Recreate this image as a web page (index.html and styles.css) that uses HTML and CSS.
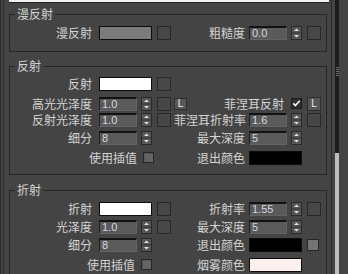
FILE: index.html
```html
<!DOCTYPE html>
<html>
<head>
<meta charset="utf-8">
<link rel="stylesheet" href="styles.css">
</head>
<body>
<div class="app">
  <div class="panel">
    <div class="topbar"></div>

    <fieldset class="group g1">
      <legend>漫反射</legend>
      <div class="rows">
        <div class="row">
          <span class="lbl">漫反射</span>
          <span class="swatch sw-gray"></span>
          <span class="sq"></span>
          <span class="rlbl">粗糙度</span>
          <span class="num"><span class="field">0.0</span><svg class="spin" width="11" height="14" viewBox="0 0 11 14"><rect x="0.5" y="0.5" width="10" height="13" fill="#565656" stroke="#2a2a2a"/><path d="M1 7h9" stroke="#333"/><path d="M5.5 2.5L8 5H3z" fill="#e0e0e0"/><path d="M3 9H8L5.5 11.5z" fill="#e0e0e0"/></svg></span>
          <span class="sq"></span>
        </div>
      </div>
    </fieldset>

    <fieldset class="group g2">
      <legend>反射</legend>
      <div class="rows">
        <div class="row">
          <span class="lbl">反射</span>
          <span class="swatch sw-white"></span>
          <span class="sq"></span>
        </div>
        <div class="row">
          <span class="lbl">高光光泽度</span>
          <span class="num"><span class="field">1.0</span><svg class="spin" width="11" height="14" viewBox="0 0 11 14"><rect x="0.5" y="0.5" width="10" height="13" fill="#565656" stroke="#2a2a2a"/><path d="M1 7h9" stroke="#333"/><path d="M5.5 2.5L8 5H3z" fill="#e0e0e0"/><path d="M3 9H8L5.5 11.5z" fill="#e0e0e0"/></svg></span>
          <span class="sq"></span>
          <span class="lbtn">L</span>
          <span class="rcheck"><span class="rtext">菲涅耳反射</span><svg class="cb" width="11" height="11" viewBox="0 0 11 11"><rect x="0.5" y="0.5" width="10" height="10" fill="#2e2e2e" stroke="#1c1c1c"/><path d="M2.3 5.4L4.4 7.6L8.7 2.8" fill="none" stroke="#f2f2f2" stroke-width="1.7"/></svg></span>
          <span class="lbtn lbtn-r">L</span>
        </div>
        <div class="row">
          <span class="lbl">反射光泽度</span>
          <span class="num"><span class="field">1.0</span><svg class="spin" width="11" height="14" viewBox="0 0 11 14"><rect x="0.5" y="0.5" width="10" height="13" fill="#565656" stroke="#2a2a2a"/><path d="M1 7h9" stroke="#333"/><path d="M5.5 2.5L8 5H3z" fill="#e0e0e0"/><path d="M3 9H8L5.5 11.5z" fill="#e0e0e0"/></svg></span>
          <span class="sq"></span>
          <span class="rlbl">菲涅耳折射率</span>
          <span class="num"><span class="field">1.6</span><svg class="spin" width="11" height="14" viewBox="0 0 11 14"><rect x="0.5" y="0.5" width="10" height="13" fill="#565656" stroke="#2a2a2a"/><path d="M1 7h9" stroke="#333"/><path d="M5.5 2.5L8 5H3z" fill="#e0e0e0"/><path d="M3 9H8L5.5 11.5z" fill="#e0e0e0"/></svg></span>
          <span class="sq"></span>
        </div>
        <div class="row">
          <span class="lbl">细分</span>
          <span class="num"><span class="field">8</span><svg class="spin" width="11" height="14" viewBox="0 0 11 14"><rect x="0.5" y="0.5" width="10" height="13" fill="#565656" stroke="#2a2a2a"/><path d="M1 7h9" stroke="#333"/><path d="M5.5 2.5L8 5H3z" fill="#e0e0e0"/><path d="M3 9H8L5.5 11.5z" fill="#e0e0e0"/></svg></span>
          <span class="rlbl">最大深度</span>
          <span class="num"><span class="field">5</span><svg class="spin" width="11" height="14" viewBox="0 0 11 14"><rect x="0.5" y="0.5" width="10" height="13" fill="#565656" stroke="#2a2a2a"/><path d="M1 7h9" stroke="#333"/><path d="M5.5 2.5L8 5H3z" fill="#e0e0e0"/><path d="M3 9H8L5.5 11.5z" fill="#e0e0e0"/></svg></span>
        </div>
        <div class="row">
          <span class="lcheck"><span class="ltext">使用插值</span><span class="box"></span></span>
          <span class="rlbl">退出颜色</span>
          <span class="swatch sw-black"></span>
        </div>
      </div>
    </fieldset>

    <fieldset class="group g3">
      <legend>折射</legend>
      <div class="rows">
        <div class="row">
          <span class="lbl">折射</span>
          <span class="swatch sw-white"></span>
          <span class="sq"></span>
          <span class="rlbl">折射率</span>
          <span class="num"><span class="field">1.55</span><svg class="spin" width="11" height="14" viewBox="0 0 11 14"><rect x="0.5" y="0.5" width="10" height="13" fill="#565656" stroke="#2a2a2a"/><path d="M1 7h9" stroke="#333"/><path d="M5.5 2.5L8 5H3z" fill="#e0e0e0"/><path d="M3 9H8L5.5 11.5z" fill="#e0e0e0"/></svg></span>
          <span class="sq"></span>
        </div>
        <div class="row">
          <span class="lbl">光泽度</span>
          <span class="num"><span class="field">1.0</span><svg class="spin" width="11" height="14" viewBox="0 0 11 14"><rect x="0.5" y="0.5" width="10" height="13" fill="#565656" stroke="#2a2a2a"/><path d="M1 7h9" stroke="#333"/><path d="M5.5 2.5L8 5H3z" fill="#e0e0e0"/><path d="M3 9H8L5.5 11.5z" fill="#e0e0e0"/></svg></span>
          <span class="sq"></span>
          <span class="rlbl">最大深度</span>
          <span class="num"><span class="field">5</span><svg class="spin" width="11" height="14" viewBox="0 0 11 14"><rect x="0.5" y="0.5" width="10" height="13" fill="#565656" stroke="#2a2a2a"/><path d="M1 7h9" stroke="#333"/><path d="M5.5 2.5L8 5H3z" fill="#e0e0e0"/><path d="M3 9H8L5.5 11.5z" fill="#e0e0e0"/></svg></span>
        </div>
        <div class="row">
          <span class="lbl">细分</span>
          <span class="num"><span class="field">8</span><svg class="spin" width="11" height="14" viewBox="0 0 11 14"><rect x="0.5" y="0.5" width="10" height="13" fill="#565656" stroke="#2a2a2a"/><path d="M1 7h9" stroke="#333"/><path d="M5.5 2.5L8 5H3z" fill="#e0e0e0"/><path d="M3 9H8L5.5 11.5z" fill="#e0e0e0"/></svg></span>
          <span class="rlbl">退出颜色</span>
          <span class="swatch sw-black"></span>
          <span class="mini"></span>
        </div>
        <div class="row">
          <span class="lcheck lcheck-2"><span class="ltext">使用插值</span><span class="box"></span></span>
          <span class="rlbl">烟雾颜色</span>
          <span class="swatch sw-fog"></span>
        </div>
      </div>
    </fieldset>
  </div>

  <div class="scroll">
    <div class="bar">
      <div class="thumb"><span class="grip"></span></div>
      <div class="track"></div>
    </div>
  </div>
</div>
</body>
</html>
```

FILE: styles.css
```css
html, body {
  margin: 0;
  padding: 0;
}
body {
  background: #444444;
  font-family: "Noto Sans CJK SC", "Liberation Sans", sans-serif;
  font-size: 12px;
  color: #d4d4d4;
}
.app {
  display: flex;
  width: 348px;
  height: 274px;
  overflow: hidden;
}
.panel {
  width: 332px;
  flex: none;
  box-sizing: border-box;
  border-left: 1px solid #2a2a2a;
  border-right: 1px solid #2a2a2a;
  box-shadow: inset 2px 0 0 #444444, inset 3px 0 0 #2c2c2c;
  overflow: hidden;
}
.topbar {
  height: 2px;
  margin: 0 2px 0 8px;
  background: #f2f2f2;
  border-bottom: 1px solid #1e1e1e;
}
.group {
  border: 1px solid #262626;
  margin: 0 4px 0 8px;
  padding: 0 4px 11px 0;
  min-width: 0;
}
.g1 { margin-top: 4px; padding-top: 5px; }
.g2 { margin-top: 7px; padding-top: 4px; }
.g3 { margin-top: 8px; padding-top: 5px; }
.group legend {
  margin-left: 5px;
  padding: 0 2px;
  line-height: 14px;
  height: 14px;
  color: #d4d4d4;
}
.rows {
  display: flex;
  flex-direction: column;
  gap: 4px;
}
.row {
  display: grid;
  grid-template-columns: 89px 58px 17px 13px 62px 58px 14px;
  height: 14px;
  align-items: center;
}
.lbl {
  grid-column: 1;
  text-align: right;
  padding-right: 7px;
  line-height: 14px;
  white-space: nowrap;
}
.rlbl {
  grid-column: 4 / 6;
  text-align: right;
  padding-right: 4px;
  line-height: 14px;
  white-space: nowrap;
}
.swatch {
  display: block;
  width: 53px;
  height: 14px;
  box-sizing: border-box;
  border: 1px solid #0c0c0c;
}
.sw-gray { background: #7c7c7c; }
.sw-white { background: #ffffff; }
.sw-black { background: #000000; }
.sw-fog { background: #fdf1ef; }
.sq {
  display: block;
  width: 14px;
  height: 14px;
  box-sizing: border-box;
  border: 1px solid #282828;
  background: #474747;
}
.mini {
  grid-column: 7;
  display: block;
  width: 12px;
  height: 12px;
  box-sizing: border-box;
  border: 1px solid #262626;
  background: #747474;
}
.num {
  display: flex;
  gap: 4px;
  width: 53px;
}
.field {
  width: 38px;
  height: 14px;
  box-sizing: border-box;
  background: #5a5a5a;
  border-top: 2px solid #121212;
  border-left: 1px solid #1e1e1e;
  border-right: 1px solid #646464;
  border-bottom: 1px solid #646464;
  font-family: "Liberation Sans", sans-serif;
  font-size: 11px;
  line-height: 11px;
  color: #d6d8e0;
  padding-left: 2px;
}
.spin {
  display: block;
  flex: none;
}
.lbtn {
  grid-column: 4;
  display: flex;
  align-items: center;
  justify-content: center;
  width: 13px;
  height: 12px;
  box-sizing: border-box;
  border: 1px solid #2c2c2c;
  background: #575757;
  font-family: "Liberation Sans", sans-serif;
  font-size: 10px;
  color: #eeeeee;
}
.lbtn-r {
  grid-column: 7;
  width: 14px;
  height: 14px;
}
.rcheck {
  grid-column: 5 / 7;
  display: flex;
  justify-content: flex-end;
  align-items: center;
  gap: 7px;
  padding-right: 5px;
  white-space: nowrap;
}
.cb { display: block; flex: none; }
.lcheck {
  grid-column: 1 / 3;
  display: flex;
  justify-content: flex-end;
  align-items: center;
  gap: 6px;
  padding-right: 3px;
  white-space: nowrap;
}
.lcheck-2 { padding-right: 5px; }
.box {
  display: block;
  width: 11px;
  height: 11px;
  box-sizing: border-box;
  border: 1px solid #262626;
  background: #646464;
  box-shadow: inset 1px 1px 0 #555;
}
.scroll {
  flex: 1;
  display: flex;
  padding-left: 3px;
}
.bar {
  width: 4px;
  display: flex;
  flex-direction: column;
}
.thumb {
  height: 153px;
  background: #1c1c1c;
  display: flex;
  justify-content: center;
}
.grip {
  display: block;
  width: 3px;
  height: 10px;
  margin-top: 67px;
  background: repeating-linear-gradient(#6a6a6a 0 1px, transparent 1px 2px);
}
.track {
  flex: 1;
  background: #bdbdbd;
}
```
